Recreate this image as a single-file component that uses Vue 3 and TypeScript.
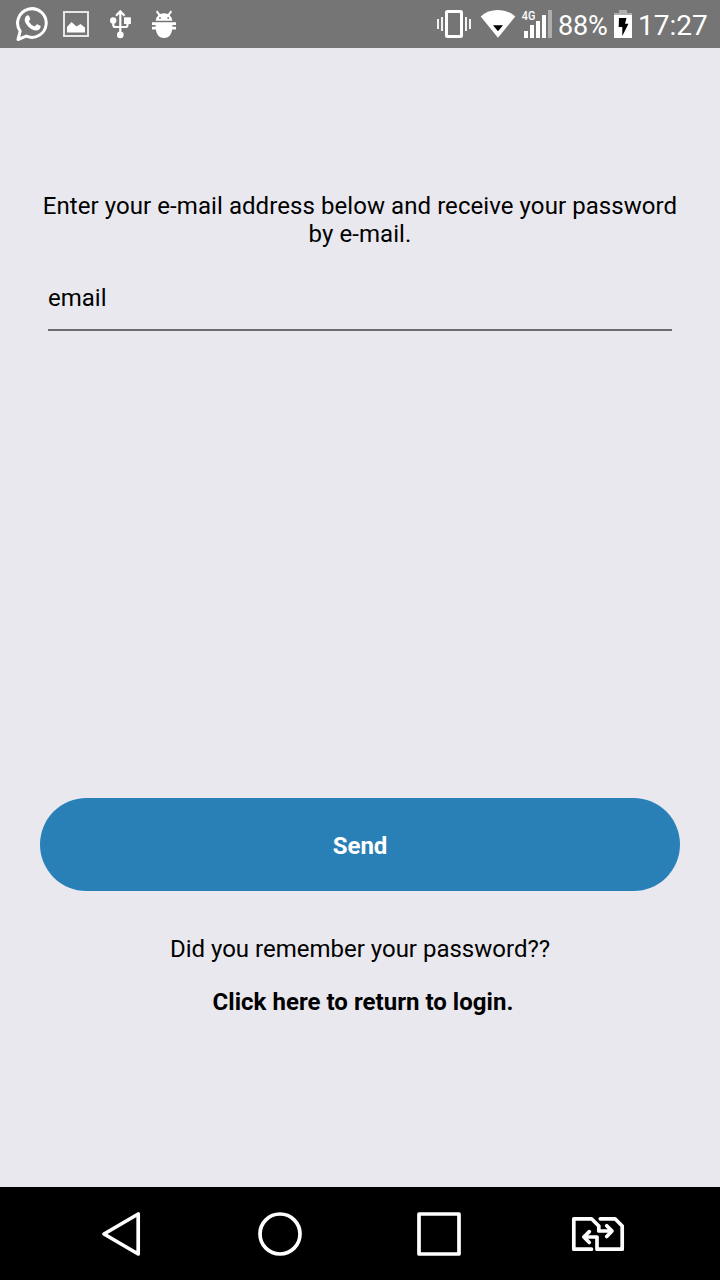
<script setup lang="ts">
import { ref } from 'vue'

const email = ref<string>('')
const battery = 88
const time = '17:27'
const signalBars = [
  { x: 524, top: 31, active: true },
  { x: 530, top: 25, active: true },
  { x: 536, top: 21, active: true },
  { x: 542, top: 15, active: true },
  { x: 548, top: 10, active: false },
]
</script>

<template>
  <div class="screen">
    <header class="status">
      <div class="notifications">
        <svg width="34" height="48" viewBox="15 0 34 48">
          <path d="M18 39.5 L20.2 31.2 A14.3 14.3 0 1 1 26.2 36.1 Z" fill="none" stroke="#fff" stroke-width="3" stroke-linejoin="round" />
          <path d="M27.4 15.3 Q28.7 15.1 29.2 16.3 L30.2 18.8 Q30.4 19.7 28.7 21.4 Q30.8 25 34.7 26.6 L36.6 24.5 Q37.1 24.1 37.7 24.4 L40.3 25.7 Q40.8 26 40.6 27 Q39.8 30.3 36.2 30.4 Q32.2 30.4 28.2 26.4 Q24.5 22.8 24.7 19.3 Q25 16.3 27.4 15.3 Z" fill="#fff" />
        </svg>
        <svg width="26" height="48" viewBox="63 0 26 48">
          <rect x="64" y="12" width="24" height="24" fill="none" stroke="#e6e6e6" stroke-width="2" />
          <path d="M67 32.5 V27 L71.5 22 L76.5 26.5 L80.5 24 L85 27.5 V32.5 Z" fill="#fff" />
        </svg>
        <svg width="22" height="48" viewBox="110 0 22 48">
          <path d="M120.3 35 V12 M116 15.7 L120.3 11.3 L124.6 15.7 M113.3 20 V25 Q113.3 27 115.3 27 H125.5 Q127.5 27 127.5 25 V20" fill="none" stroke="#fff" stroke-width="2.2" />
          <circle cx="113.2" cy="20.5" r="3.2" fill="#fff" />
          <rect x="124" y="17.3" width="6.9" height="6.7" fill="#fff" />
          <circle cx="120.3" cy="34.9" r="3.3" fill="#fff" />
        </svg>
        <svg width="26" height="48" viewBox="151 0 26 48">
          <path d="M155.7 20.8 A8.3 7.6 0 0 1 172.3 20.8 Z M155.7 22.3 H176 V25 H172.4 V26.7 H176 V29.4 H172.2 Q171 38 164 38 Q157 38 155.8 29.4 H152 V26.7 H155.6 V25 H152 V22.3 Z" fill="#fff" />
          <path d="M156.7 11.2 L160 15.8 M171.3 11.2 L168 15.8" stroke="#fff" stroke-width="2" />
          <circle cx="160" cy="18" r="0.9" fill="#777" />
          <circle cx="168.2" cy="18" r="0.9" fill="#777" />
        </svg>
      </div>
      <div class="indicators">
        <svg width="36" height="48" viewBox="436 0 36 48">
          <rect x="446.5" y="11.5" width="15" height="25" rx="1" fill="none" stroke="#fff" stroke-width="3" />
          <path d="M438 19 V29 M442 17 V31 M466 17 V31 M470 19 V29" stroke="#fff" stroke-width="1.8" />
        </svg>
        <svg width="36" height="48" viewBox="480 0 36 48">
          <path d="M480.7 16.4 Q488 10 498 10 Q508 10 515.3 16.4 L498 37.7 Z" fill="#fff" />
          <path d="M493 25.2 H503 L498 31.2 Z" fill="#000" />
        </svg>
        <svg class="signal" width="31" height="48" viewBox="521 0 31 48">
          <text x="521.8" y="20" textLength="13.5" lengthAdjust="spacingAndGlyphs">4G</text>
          <rect v-for="bar in signalBars" :key="bar.x" :x="bar.x" :y="bar.top" width="4" :height="38 - bar.top" :fill="bar.active ? '#fff' : '#adadad'" />
        </svg>
        <span class="percent">{{ battery }}%</span>
        <svg width="18" height="48" viewBox="614 0 18 48">
          <path d="M619 10 H627 V13 H632 V15 H614 V13 H619 Z" fill="#adadad" />
          <rect x="614" y="15" width="18" height="23" fill="#fff" />
          <path d="M619 18 H626.5 L625 23.7 H628.5 L622.3 36 V27 H618.7 Z" fill="#000" />
        </svg>
        <time class="clock">{{ time }}</time>
      </div>
    </header>

    <main class="content">
      <p class="intro">Enter your e-mail address below and receive your password by e-mail.</p>
      <input v-model="email" class="email" type="text" placeholder="email" />
      <button class="send" type="button">Send</button>
      <p class="question">Did you remember your password??</p>
      <a class="login">Click here to return to login.</a>
    </main>

    <nav class="navigation">
      <svg width="40" height="46" viewBox="101 1211 40 46">
        <path d="M104 1234 L138.2 1214 V1254 Z" />
      </svg>
      <svg class="home" width="46" height="46" viewBox="257 1211 46 46">
        <circle cx="280" cy="1234" r="20" />
      </svg>
      <svg class="recent" width="46" height="46" viewBox="416 1211 46 46">
        <rect x="419" y="1214" width="40" height="40" />
      </svg>
      <svg class="sim" width="54" height="46" viewBox="571 1211 54 46">
        <path d="M591.5 1249.2 H573.8 V1218.8 H591.5 L598.8 1226 V1231 H611.5 M606.7 1225.7 L612 1231 L606.7 1236.5 M600.3 1218.8 H615 L622.2 1226 V1249.2 H597 V1237 H584 M589.3 1231.6 L583.8 1237 L589.3 1242.5" />
      </svg>
    </nav>
  </div>
</template>

<style>
body {
  margin: 0;
}
</style>

<style scoped>
.screen {
  display: flex;
  flex-direction: column;
  width: 720px;
  height: 1280px;
  overflow: hidden;
  background: #e9e8ee;
  color: #000;
  font-family: Roboto, sans-serif;
  font-size: 24px;
  line-height: 28px;
}
svg {
  display: block;
  flex: none;
}
.status {
  display: flex;
  justify-content: space-between;
  height: 48px;
  box-sizing: border-box;
  padding: 0 12px 0 15px;
  background: #757575;
  color: #fff;
}
.notifications,
.indicators {
  display: flex;
  align-items: center;
}
.notifications svg:nth-child(2) {
  margin-left: 14px;
}
.notifications svg:nth-child(3) {
  margin-left: 21px;
}
.notifications svg:nth-child(4) {
  margin-left: 19px;
}
.indicators svg:nth-child(2) {
  margin-left: 8px;
}
.signal {
  margin-left: 5px;
}
.signal text {
  fill: #fff;
  font-size: 12px;
  font-weight: 500;
}
.percent {
  width: 50px;
  margin: 4px 6px 0 6px;
  font-size: 27px;
  letter-spacing: -0.2px;
  white-space: nowrap;
}
.clock {
  width: 70px;
  margin: 4px 0 0 6px;
  font-size: 28px;
  white-space: nowrap;
}
.content {
  display: flex;
  flex: 1;
  flex-direction: column;
  align-items: center;
  padding: 144px 40px 0;
}
p {
  margin: 0;
}
.intro {
  letter-spacing: 0.07px;
  text-align: center;
}
.email {
  box-sizing: border-box;
  width: 624px;
  height: 51px;
  margin-top: 32px;
  padding: 0 0 13px;
  border: 0;
  border-bottom: 2px solid #6c6b6e;
  border-radius: 0;
  outline: 0;
  background: transparent;
  color: #000;
  font: inherit;
}
.email::placeholder {
  color: #000;
  opacity: 1;
}
.send {
  width: 100%;
  height: 93px;
  margin-top: 467px;
  padding: 3px 0 0;
  border: 0;
  border-radius: 47px;
  background: #2980b6;
  color: #fff;
  font: inherit;
  font-weight: 700;
}
.question {
  margin-top: 44px;
}
.login {
  margin-top: 25px;
  padding-left: 6px;
  font-weight: 700;
  letter-spacing: 0.03px;
}
.navigation {
  display: flex;
  align-items: center;
  box-sizing: border-box;
  height: 93px;
  padding: 1px 0 0 101px;
  background: #000;
}
.navigation svg {
  fill: none;
  stroke: #fff;
  stroke-width: 3.7;
  stroke-linejoin: round;
  stroke-linecap: round;
}
.home {
  margin-left: 116px;
}
.recent {
  margin-left: 113px;
}
.sim {
  margin-left: 109px;
}
</style>
